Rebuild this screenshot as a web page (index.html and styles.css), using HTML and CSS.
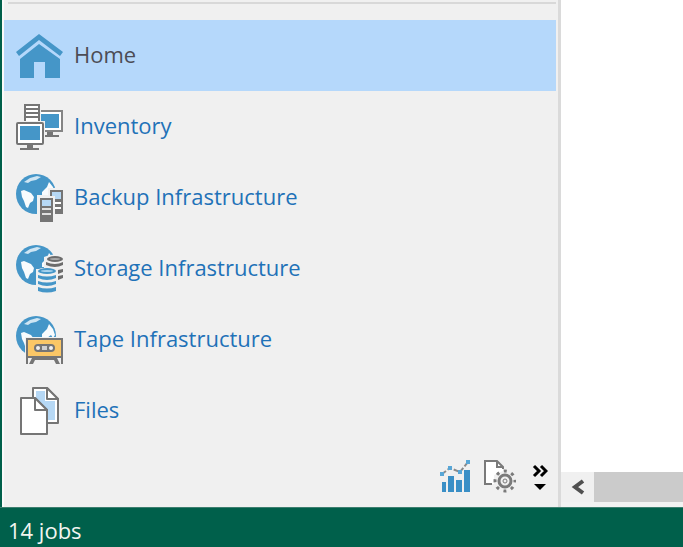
FILE: index.html
```
<!DOCTYPE html>
<html lang="en">
<head>
    <meta charset="utf-8">
    <title>Backup Console</title>
    <link rel="stylesheet" href="styles.css">
</head>
<body>
    <!-- shared globe used by the infrastructure icons -->
    <svg class="defs" aria-hidden="true">
        <symbol id="globe" viewBox="0 0 40 40">
            <circle cx="20" cy="20" r="20" fill="#4596c8"/>
            <path fill="#cfe5f3" d="M8 8 L14 4 L21 2 L25 3 L20 6 L15 7 L12 9 Z"/>
            <path fill="#f8fbfd" d="M5 17 L8 16 L15 19 L18 23 L17 27 L14 29 L12 34 L10 33 L8 27 L6 23 Z"/>
            <path fill="#f8fbfd" d="M33 8 L37 13 L39 19 L37 22 L35 19 L31 22 L26 22 L26 18 L29 15 L31 13 Z"/>
        </symbol>
    </svg>

    <div class="window">
        <main class="workspace">
            <aside class="sidebar">
                <div class="splitter"></div>
                <nav class="views">
                    <a href="#home" class="view selected" aria-current="page">
                        <svg class="view-icon" viewBox="0 0 48 48" fill="#4596c8">
                            <path d="M23 2 L47 20 L44 24 L23 8 L3 24 L0 20 Z"/>
                            <path d="M23 12 L44 27 V46 H29 V30 H18 V46 H4 V27 Z"/>
                        </svg>
                        <span class="view-name">Home</span>
                    </a>
                    <a href="#inventory" class="view">
                        <svg class="view-icon" viewBox="0 0 48 48">
                            <path fill="#757575" d="M31 28 H37 V32 H43 V34 H25 V32 H31 Z"/>
                            <rect x="22" y="8" width="24" height="20" fill="#fff" stroke="#858585" stroke-width="2"/>
                            <rect x="25" y="11" width="18" height="14" fill="#4596c8"/>
                            <rect x="7" y="0" width="18" height="20" fill="#f0f0f0"/>
                            <rect x="9" y="2" width="14" height="17" fill="#fff" stroke="#757575" stroke-width="2"/>
                            <path stroke="#757575" stroke-width="2" d="M9 6 H23 M9 10 H23 M9 14 H23"/>
                            <rect x="-1" y="18" width="30" height="25" fill="#f0f0f0"/>
                            <path fill="#757575" d="M11 41 H17 V45 H23 V47 H4 V45 H11 Z"/>
                            <rect x="1" y="20" width="26" height="21" rx="1" fill="#fff" stroke="#757575" stroke-width="2"/>
                            <rect x="4" y="23" width="20" height="14" fill="#4596c8"/>
                        </svg>
                        <span class="view-name">Inventory</span>
                    </a>
                    <a href="#backup" class="view">
                        <svg class="view-icon" viewBox="0 0 48 48">
                            <use href="#globe" x="0" y="0" width="40" height="40"/>
                            <path fill="#f0f0f0" d="M32 14 H49 V42 H40 V50 H21 V21 H32 Z"/>
                            <rect x="34" y="16" width="13" height="24" fill="#757575"/>
                            <rect x="36" y="18" width="9" height="7" fill="#b6d8f5"/>
                            <path stroke="#fff" stroke-width="2" d="M39 29 H45 M39 34 H45"/>
                            <rect x="22" y="22" width="17" height="28" fill="#f0f0f0"/>
                            <rect x="24" y="24" width="13" height="24" fill="#757575"/>
                            <rect x="26" y="26" width="9" height="6" fill="#b6d8f5"/>
                            <path stroke="#e0e0e0" stroke-width="2" d="M26 35 H35 M26 40 H35"/>
                        </svg>
                        <span class="view-name">Backup Infrastructure</span>
                    </a>
                    <a href="#storage" class="view">
                        <svg class="view-icon" viewBox="0 0 48 48">
                            <use href="#globe" x="0" y="0" width="40" height="40"/>
                            <path fill="#f0f0f0" d="M28 12 Q38 7 49 12 V37 H42 V50 H20 V24 H28 Z"/>
                            <ellipse cx="39" cy="14" rx="8" ry="3" fill="#6c6c6c"/>
                            <ellipse cx="39" cy="14" rx="5" ry="1" fill="#a8a8a8"/>
                            <path fill="#6c6c6c" d="M30 17 Q39 21 47 17 V20 Q39 24 30 20 Z M42 25 L47 24 V27 L42 29 Z M42 31 L47 30 V33 L42 35 Z"/>
                            <path fill="#f0f0f0" d="M20 25 Q30 20 42 25 V50 H20 Z"/>
                            <ellipse cx="31" cy="26" rx="9" ry="3" fill="#4596c8"/>
                            <ellipse cx="31" cy="26" rx="6" ry="1" fill="#a9d3ee"/>
                            <path fill="#4596c8" d="M22 30 Q31 33 40 30 V33 Q31 37 22 33 Z M22 36 Q31 39 40 36 V39 Q31 43 22 39 Z M22 42 Q31 45 40 42 V46 Q31 49 22 46 Z"/>
                        </svg>
                        <span class="view-name">Storage Infrastructure</span>
                    </a>
                    <a href="#tape" class="view">
                        <svg class="view-icon" viewBox="0 0 48 48">
                            <use href="#globe" x="0" y="0" width="40" height="40"/>
                            <rect x="9" y="21" width="39" height="27" fill="#f0f0f0"/>
                            <path fill="#757575" d="M10 22 H47 V48 H10 Z"/>
                            <rect x="12" y="24" width="33" height="16" fill="#fbc766"/>
                            <path fill="#f0f0f0" d="M12 42 H16 L13 48 H12 Z M41 42 H45 V48 H44 Z M19 44 H38 L40 48 H17 Z"/>
                            <rect x="18" y="28" width="21" height="8" rx="4" fill="#757575"/>
                            <circle cx="22" cy="32" r="2" fill="#f0f0f0"/>
                            <circle cx="35" cy="32" r="2" fill="#f0f0f0"/>
                            <rect x="26" y="30" width="5" height="4" fill="#d0d0d0"/>
                        </svg>
                        <span class="view-name">Tape Infrastructure</span>
                    </a>
                    <a href="#files" class="view">
                        <svg class="view-icon" viewBox="0 0 48 48" stroke="#757575" stroke-width="2" stroke-linejoin="round">
                            <path fill="#fff" d="M17 1 H31 L42 12 V36 H17 Z"/>
                            <path fill="#b6d8f5" stroke="none" d="M20 4 H29 V14 H39 V33 H20 Z"/>
                            <path fill="#fff" d="M31 1 V12 H42 Z"/>
                            <path fill="#fff" d="M5 11 H19 L31 23 V47 H5 Z"/>
                            <path fill="#fff" d="M19 11 V23 H31 Z"/>
                        </svg>
                        <span class="view-name">Files</span>
                    </a>
                </nav>
                <div class="shortcuts">
                    <button type="button" class="shortcut" aria-label="History">
                        <svg width="32" height="34" viewBox="0 0 32 34">
                            <path fill="#3a8fc6" d="M2 22 H6 V32 H2 Z M8 16 H14 V32 H8 Z M16 20 H22 V32 H16 Z M24 10 H30 V32 H24 Z"/>
                            <path fill="none" stroke="#8a8a8a" stroke-width="2" stroke-dasharray="5 2" d="M2 14 L10 8 L20 12 L28 2"/>
                            <path fill="#58a6d6" d="M0 12 H4 V16 H0 Z M8 6 H12 V10 H8 Z M18 10 H22 V14 H18 Z M26 0 H30 V4 H26 Z"/>
                        </svg>
                    </button>
                    <button type="button" class="shortcut" aria-label="Settings">
                        <svg width="32" height="34" viewBox="0 0 32 34" fill="none" stroke="#7a7a7a" stroke-width="2">
                            <path fill="#fff" stroke="none" d="M1 1 H13 L19 7 V11 L10 15 V24 H1 Z"/>
                            <path d="M8 24 H1 V1 H13 L19 7 V9 M13 1 V7 H19"/>
                            <circle cx="21" cy="21" r="10" stroke-width="3" stroke-dasharray="3 4.85" stroke-dashoffset="1.5"/>
                            <circle cx="21" cy="21" r="6" fill="#f0f0f0" stroke-width="3"/>
                            <circle cx="21" cy="21" r="2" stroke-width="1"/>
                        </svg>
                    </button>
                    <button type="button" class="shortcut more" aria-label="More views">
                        <svg width="16" height="34" viewBox="0 0 16 34">
                            <path fill="none" stroke="#000" stroke-width="3" d="M2 6 L7 11 L2 16 M9 6 L14 11 L9 16"/>
                            <path d="M2 24 H14 L8 30 Z"/>
                        </svg>
                    </button>
                </div>
            </aside>
            <section class="content">
                <div class="scrollbar">
                    <button type="button" class="scroll-left" aria-label="Scroll left">
                        <svg width="14" height="16" viewBox="0 0 14 16">
                            <path fill="none" stroke="#505050" stroke-width="4" d="M12 2 L4 8 L12 14"/>
                        </svg>
                    </button>
                    <div class="scroll-thumb"></div>
                </div>
            </section>
        </main>
        <footer class="statusbar">14 jobs</footer>
    </div>
</body>
</html>
```
FILE: styles.css
```
* {
    box-sizing: border-box;
}

body {
    margin: 0;
    font-family: "Open Sans", "Noto Sans", sans-serif;
    font-size: 22px;
    background-color: #fff;
}

.defs {
    display: none;
}

.window {
    display: flex;
    flex-direction: column;
    min-height: 100vh;
}

.workspace {
    display: flex;
    flex: 1;
    border-left: 2px solid #00604b;
}

.sidebar {
    display: flex;
    flex-direction: column;
    width: calc(82% + 1px);
    padding-top: 2px;
    background-color: #f0f0f0;
    border-left: 2px solid #fafafa;
    border-right: 3px solid #dadada;
}

.splitter {
    height: 2px;
    margin: 0 2px 16px 4px;
    background-color: #d8d8d8;
}

.views {
    display: flex;
    flex-direction: column;
    margin-right: 2px;
}

.view {
    display: flex;
    align-items: center;
    gap: 10px;
    height: 71px;
    padding-left: 12px;
    color: #1f72b8;
    text-decoration: none;
}

.view:hover {
    background-color: #dcecfb;
}

.view.selected {
    background-color: #b5d8fb;
    color: #4c4c55;
}

.view-icon {
    width: 48px;
    height: 48px;
    overflow: visible;
}

.view-name {
    padding-bottom: 4px;
}

.shortcuts {
    display: flex;
    justify-content: flex-end;
    gap: 12px;
    margin-top: auto;
    padding: 0 10px 13px;
}

.shortcut {
    display: flex;
    padding: 0;
    border: none;
    background: none;
    cursor: pointer;
}

.more {
    margin-left: 4px;
}

.content {
    display: flex;
    flex: 1;
    flex-direction: column;
    justify-content: flex-end;
    background-color: #fff;
}

.scrollbar {
    display: flex;
    height: 35px;
    padding-bottom: 5px;
    background-color: #f2f2f2;
}

.scroll-left {
    display: flex;
    align-items: center;
    justify-content: center;
    width: 33px;
    padding: 0;
    border: none;
    background-color: #f0f0f0;
}

.scroll-thumb {
    flex: 1;
    background-color: #cbcbcb;
}

.statusbar {
    height: 40px;
    padding: 4px 8px 0;
    border-top: 1px solid #3d7f6f;
    background-color: #00604b;
    color: #f2f5f0;
    line-height: 36px;
}
```
